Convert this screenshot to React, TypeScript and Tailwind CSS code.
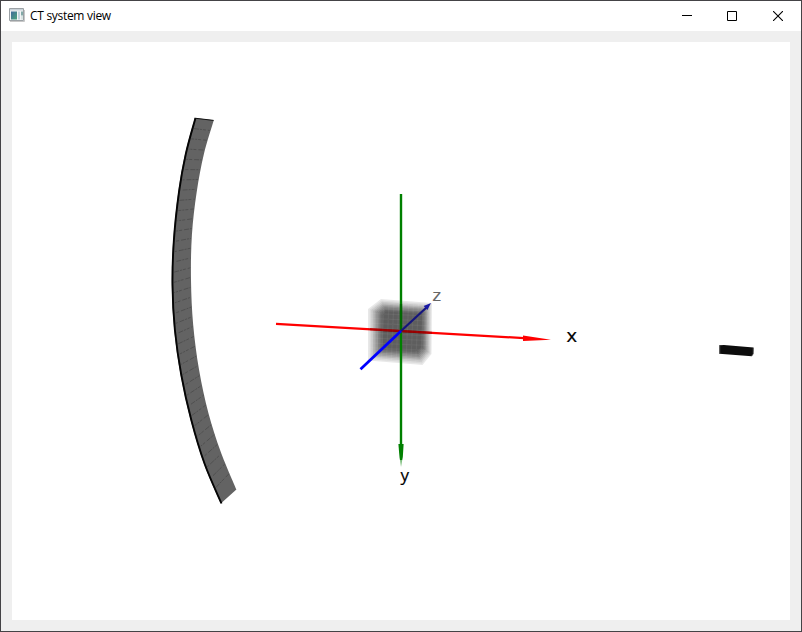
import React from "react";

type Point = [number, number];

const outerEdge: Point[] = [
  [194.8, 118], [185.1, 154], [178.3, 192], [173.2, 240], [171.8, 285], [174.2, 330], [180.6, 375], [190.6, 420], [204, 464], [220.8, 503.5],
];
const innerEdge: Point[] = [
  [213.8, 120.3], [203.9, 154], [196.7, 192], [191.9, 235], [191, 280], [193.2, 325], [199.1, 370], [208.4, 413], [220.8, 452], [236.4, 489.5],
];

// Smooth cubic segments through a list of points.
function spline(points: Point[]): string {
  return points
    .slice(1)
    .map((p2, i) => {
      const p1 = points[i];
      const p0 = points[i - 1] ?? p1;
      const p3 = points[i + 2] ?? p2;
      return `C${p1[0] + (p2[0] - p0[0]) / 6},${p1[1] + (p2[1] - p0[1]) / 6} ${p2[0] - (p3[0] - p1[0]) / 6},${p2[1] - (p3[1] - p1[1]) / 6} ${p2[0]},${p2[1]}`;
    })
    .join(" ");
}

function xAt(points: Point[], y: number): number {
  for (let i = 1; i < points.length; i++) {
    if (y <= points[i][1]) {
      const [x0, y0] = points[i - 1];
      const [x1, y1] = points[i];
      return x0 + ((x1 - x0) * (y - y0)) / (y1 - y0);
    }
  }
  return points[points.length - 1][0];
}

function Detector() {
  const body = `M${outerEdge[0]} ${spline(outerEdge)} L${innerEdge[innerEdge.length - 1]} ${spline([...innerEdge].reverse())} Z`;
  const seams = Array.from({ length: 36 }, (_, i) => {
    const y1 = 128.6 + i * 10.25;
    const y2 = 120.3 + ((y1 - 118) * 369) / 385.5;
    return { x1: xAt(outerEdge, y1) + 2, y1, x2: xAt(innerEdge, y2) - 1, y2 };
  });
  return (
    <g>
      <path d={body} fill="#636363" />
      {seams.map((s, i) => (
        <line key={i} {...s} stroke="#4a4a4a" strokeWidth="0.8" strokeDasharray="5 1 2 1 3 2" strokeDashoffset={i * 2} />
      ))}
      <path d={`M${outerEdge[0]} ${spline(outerEdge)}`} transform="translate(0.7 0)" fill="none" stroke="#050505" strokeWidth="1.9" />
      <path d="M194.8 118.2L213.6 120.4" stroke="#111" strokeWidth="1" />
    </g>
  );
}

const hull: Point[] = [[368, 309], [381, 299], [432, 303], [431.5, 354], [422.5, 365], [368, 360.5]];
const core: Point[] = [[383, 314], [386, 311.5], [422, 314], [421.5, 347], [417, 351], [383, 348.5]];
const shellOpacity = [0.09, 0.06, 0.08, 0.09, 0.1, 0.11, 0.11, 0.11, 0.1, 0.08];

// Translucent shells of the cube, from its hull inwards to the dense core.
function Volume() {
  return (
    <g fill="#000">
      {shellOpacity.map((opacity, n) => {
        const t = n / (shellOpacity.length - 1);
        const points = hull.map(([x, y], i) => `${x + (core[i][0] - x) * t},${y + (core[i][1] - y) * t}`).join(" ");
        return <polygon key={n} points={points} fillOpacity={opacity} />;
      })}
    </g>
  );
}

function VoxelTexture() {
  const steps = Array.from({ length: 12 }, (_, i) => i * 4.9);
  return (
    <g stroke="#fff" strokeOpacity="0.05" strokeWidth="1.3" transform="rotate(2.6 400 332)">
      {steps.map((v) => (
        <path key={v} d={`M${373 + v} 302v60M369 ${305 + v}h62`} />
      ))}
    </g>
  );
}

function Scene() {
  return (
    <svg viewBox="12 42 778 578" className="block h-full w-full">
      <Detector />
      <path d="M276 323.8L524 338.1" stroke="#f00" strokeWidth="2.3" />
      <Volume />
      <VoxelTexture />
      <path d="M401 194V447" stroke="#008000" strokeWidth="2.4" />
      <path d="M401 304V331" stroke="#004f00" strokeWidth="2.4" strokeOpacity="0.5" />
      <path d="M370 329.2L432 332.8" stroke="#b80000" strokeWidth="2.2" strokeOpacity="0.65" />
      <path d="M401 331L427 307" stroke="#14147e" strokeWidth="2.2" />
      <path d="M431 303L423.6 306L427.4 310Z" fill="#1919a5" />
      <path d="M360.5 369.2L401 331" stroke="#0000ff" strokeWidth="2.8" />
      <path d="M523 335.4L551 339.7L523 341Z" fill="#f00" />
      <path d="M398.4 444L403.6 444L402.8 457L401 467L399.5 457Z" fill="#008000" />
      <path d="M399 460h4v7h-4z" fill="#fff" fillOpacity="0.5" />
      <path d="M719.2 345.3L724 345L753.6 347.6L753.3 354L751.8 356.3L719.2 353.8Z" fill="#0d0d0d" />
      <path d="M719.7 346V353.5" stroke="#666" strokeWidth="1" />
      <path d="M753.2 348V353.8L751.5 356" stroke="#555" strokeWidth="0.7" fill="none" />
      <g fontFamily="'Open Sans', 'Noto Sans', sans-serif">
        <text x="566.5" y="341.5" fontSize="18" fill="#000" stroke="#000" strokeWidth="0.2" textLength="10.5" lengthAdjust="spacingAndGlyphs">x</text>
        <text x="400.5" y="481.2" fontSize="17" fill="#000" stroke="#000" strokeWidth="0.2">y</text>
        <text x="432.2" y="301" fontSize="16.5" fill="#666" stroke="#666" strokeWidth="0.1" textLength="9" lengthAdjust="spacingAndGlyphs">z</text>
      </g>
    </svg>
  );
}

function AppIcon() {
  return (
    <svg width="16" height="14" viewBox="0 0 16 14" className="block">
      <defs>
        <linearGradient id="pane" x1="0" y1="0" x2="1" y2="1">
          <stop offset="0" stopColor="#3f6a9c" />
          <stop offset="1" stopColor="#4ca57b" />
        </linearGradient>
      </defs>
      <path d="M.5 .5h14v12H.5z" fill="#f2f4f5" stroke="#9ba1a5" />
      <path d="M1 1h13v1.5H1z" fill="#c8d1d7" />
      <path d="M2 3.5h6v8H2z" fill="url(#pane)" />
      <path d="M9 3.5h2v8H9z" fill="#c2d3dd" />
      <path d="M12 3.5h2v4h-2z" fill="#82a9a7" />
      <path d="M12 8h2v3.5h-2z" fill="#d9e4e2" />
      <path d="M1 13.5h14.5V2" stroke="#c7c7c7" fill="none" />
    </svg>
  );
}

export default function App() {
  return (
    <main className="flex h-[632px] w-[802px] flex-col overflow-hidden border border-[#444346] bg-[#efefef]">
      <header className="flex h-[30px] shrink-0 items-center bg-white">
        <div className="flex flex-1 items-center gap-[5px] pb-0.5 pl-2">
          <AppIcon />
          <h1 className="pt-0.5 font-['Open_Sans','Noto_Sans',sans-serif] text-[12px] leading-4 font-normal tracking-[-0.3px] text-black">CT system view</h1>
        </div>
        <div className="flex h-full text-black">
          <button aria-label="Minimize" className="flex w-[45px] items-center justify-center pl-px">
            <svg width="10" height="10" shapeRendering="crispEdges"><path d="M0 4h10v1H0z" /></svg>
          </button>
          <button aria-label="Maximize" className="flex w-[46px] items-center justify-center">
            <svg width="10" height="10" fill="none" stroke="currentColor"><path d="M.5 .5h9v9h-9z" /></svg>
          </button>
          <button aria-label="Close" className="flex w-[46px] items-center justify-center">
            <svg width="10" height="10" fill="none" stroke="currentColor" strokeWidth="1.1"><path d="M0 0l10 10M10 0l-10 10" /></svg>
          </button>
        </div>
      </header>
      <section className="flex-1 px-[11px] pt-[11px] pb-[11px]">
        <div className="h-[578px] w-[778px] bg-white">
          <Scene />
        </div>
      </section>
    </main>
  );
}
